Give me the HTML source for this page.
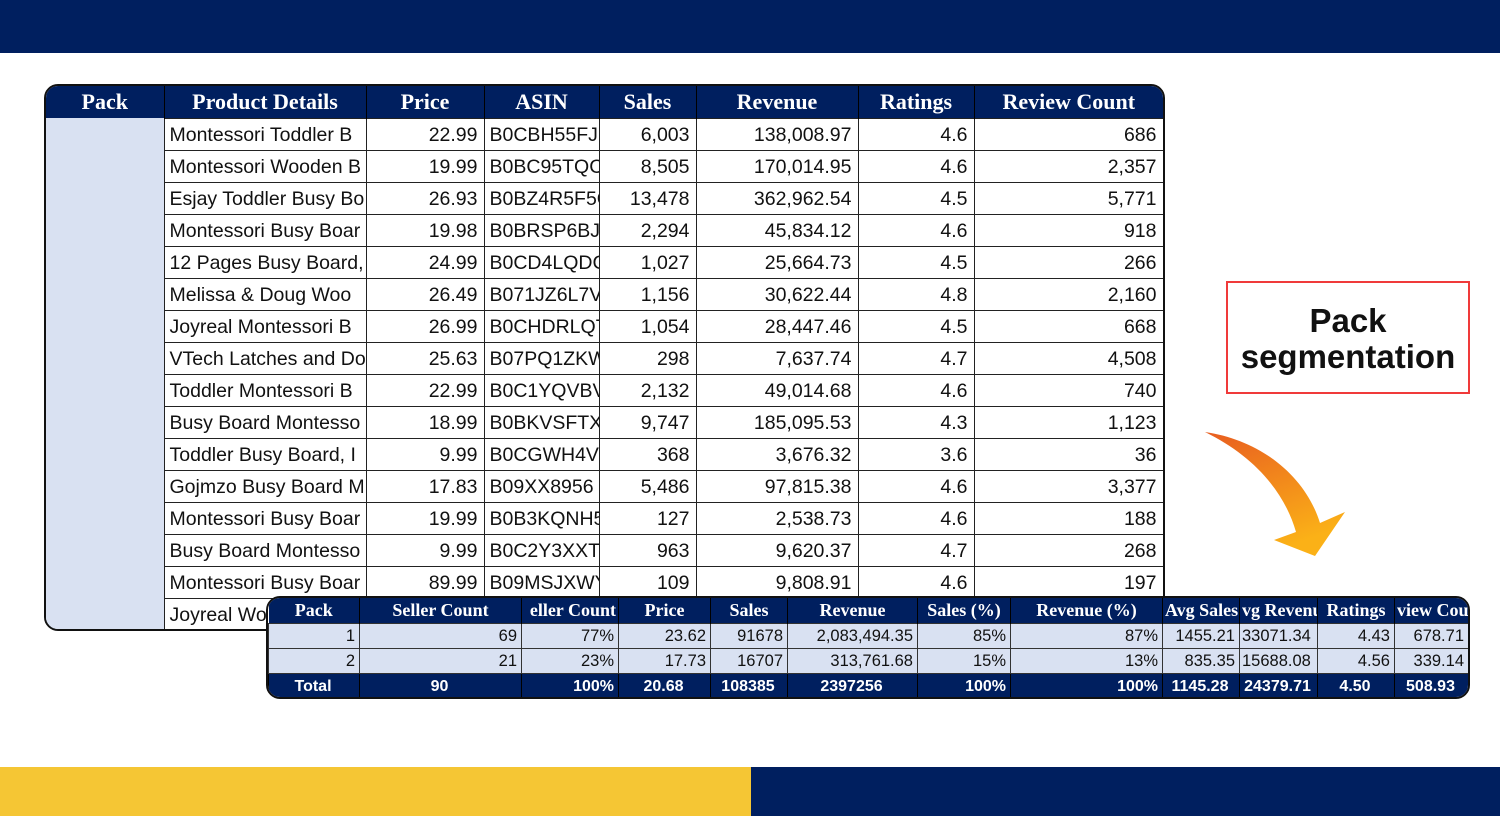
<!DOCTYPE html><html><head><meta charset="utf-8"><style>
body{margin:0;width:1500px;height:816px;position:relative;background:#fff;overflow:hidden;font-family:"Liberation Sans",sans-serif}
.bar{position:absolute}
table{border-collapse:collapse;table-layout:fixed;position:absolute}
td,th{overflow:hidden;white-space:nowrap;padding:0 5px;box-sizing:border-box}
#t1 th{background:#001f5f;color:#fff;font:bold 22px "Liberation Serif",serif;height:32px;text-align:center;border-left:1.5px solid #000}
#t1 td{height:32px;font-size:19.5px;color:#111;border:1.5px solid #222;text-align:right;padding:3px 6px 0 5px}
#t1 td.l{text-align:left}
#t1 td.p{background:#d9e1f2;border:none}
#w1{position:absolute;left:44px;top:84px;width:1117px;height:543px;border:2px solid #111;border-radius:14px;overflow:hidden;background:#fff}
#w2{position:absolute;left:266px;top:596px;width:1200px;height:99px;border:2px solid #111;border-radius:14px;overflow:hidden;background:#fff}
#t2 th{background:#001f5f;color:#fff;font:bold 18px "Liberation Serif",serif;height:25px;text-align:center;border-left:1.5px solid #000;padding:0 2px}
#t2 td{height:25px;font-size:16.5px;border:1.5px solid #333;background:#d9e1f2;text-align:right;padding:2px 4px 0 2px;color:#111}
#t2 tr.tot td{background:#001f5f;color:#fff;font-weight:bold;border-color:#000;text-align:center;font-size:16px}
</style></head><body>
<div class="bar" style="left:0;top:0;width:1500px;height:53px;background:#001f5f"></div>
<div class="bar" style="left:0;top:767px;width:751px;height:49px;background:#f5c634"></div>
<div class="bar" style="left:751px;top:767px;width:749px;height:49px;background:#001f5f"></div>

<div id="w1"><table id="t1" style="left:0;top:0;width:1117px">
<colgroup><col style="width:118px"><col style="width:202px"><col style="width:118px"><col style="width:115px"><col style="width:97px"><col style="width:162px"><col style="width:116px"><col style="width:189px"></colgroup>
<tr><th style="border-left:none">Pack</th><th>Product Details</th><th>Price</th><th>ASIN</th><th>Sales</th><th>Revenue</th><th>Ratings</th><th>Review Count</th></tr>
<tr><td class="p" rowspan="16"></td><td class="l">Montessori Toddler B</td><td>22.99</td><td class="l">B0CBH55FJK</td><td>6,003</td><td>138,008.97</td><td>4.6</td><td>686</td></tr>
<tr><td class="l">Montessori Wooden B</td><td>19.99</td><td class="l">B0BC95TQCX</td><td>8,505</td><td>170,014.95</td><td>4.6</td><td>2,357</td></tr>
<tr><td class="l">Esjay Toddler Busy Bo</td><td>26.93</td><td class="l">B0BZ4R5F5C</td><td>13,478</td><td>362,962.54</td><td>4.5</td><td>5,771</td></tr>
<tr><td class="l">Montessori Busy Boar</td><td>19.98</td><td class="l">B0BRSP6BJJ</td><td>2,294</td><td>45,834.12</td><td>4.6</td><td>918</td></tr>
<tr><td class="l">12 Pages Busy Board,</td><td>24.99</td><td class="l">B0CD4LQDC</td><td>1,027</td><td>25,664.73</td><td>4.5</td><td>266</td></tr>
<tr><td class="l">Melissa &amp; Doug Woo</td><td>26.49</td><td class="l">B071JZ6L7V</td><td>1,156</td><td>30,622.44</td><td>4.8</td><td>2,160</td></tr>
<tr><td class="l">Joyreal Montessori B</td><td>26.99</td><td class="l">B0CHDRLQT</td><td>1,054</td><td>28,447.46</td><td>4.5</td><td>668</td></tr>
<tr><td class="l">VTech Latches and Do</td><td>25.63</td><td class="l">B07PQ1ZKW</td><td>298</td><td>7,637.74</td><td>4.7</td><td>4,508</td></tr>
<tr><td class="l">Toddler Montessori B</td><td>22.99</td><td class="l">B0C1YQVBV</td><td>2,132</td><td>49,014.68</td><td>4.6</td><td>740</td></tr>
<tr><td class="l">Busy Board Montesso</td><td>18.99</td><td class="l">B0BKVSFTX</td><td>9,747</td><td>185,095.53</td><td>4.3</td><td>1,123</td></tr>
<tr><td class="l">Toddler Busy Board, I</td><td>9.99</td><td class="l">B0CGWH4V</td><td>368</td><td>3,676.32</td><td>3.6</td><td>36</td></tr>
<tr><td class="l">Gojmzo Busy Board M</td><td>17.83</td><td class="l">B09XX8956</td><td>5,486</td><td>97,815.38</td><td>4.6</td><td>3,377</td></tr>
<tr><td class="l">Montessori Busy Boar</td><td>19.99</td><td class="l">B0B3KQNH5</td><td>127</td><td>2,538.73</td><td>4.6</td><td>188</td></tr>
<tr><td class="l">Busy Board Montesso</td><td>9.99</td><td class="l">B0C2Y3XXT</td><td>963</td><td>9,620.37</td><td>4.7</td><td>268</td></tr>
<tr><td class="l">Montessori Busy Boar</td><td>89.99</td><td class="l">B09MSJXWY</td><td>109</td><td>9,808.91</td><td>4.6</td><td>197</td></tr>
<tr><td class="l">Joyreal Wooden</td><td></td><td></td><td></td><td></td><td></td><td></td></tr>
</table></div>

<div id="w2"><table id="t2" style="left:0;top:0;width:1200px">
<colgroup><col style="width:91px"><col style="width:162px"><col style="width:97px"><col style="width:92px"><col style="width:77px"><col style="width:130px"><col style="width:93px"><col style="width:152px"><col style="width:77px"><col style="width:78px"><col style="width:77px"><col style="width:74px"></colgroup>
<tr><th style="border-left:none">Pack</th><th>Seller Count</th><th style="text-align:right">eller Count</th><th>Price</th><th>Sales</th><th>Revenue</th><th>Sales (%)</th><th>Revenue (%)</th><th style="text-align:left">Avg Sales</th><th style="text-align:left">vg Revenu</th><th>Ratings</th><th style="text-align:left">view Cou</th></tr>
<tr><td>1</td><td>69</td><td>77%</td><td>23.62</td><td>91678</td><td>2,083,494.35</td><td>85%</td><td>87%</td><td>1455.21</td><td style="text-align:left">33071.34</td><td>4.43</td><td>678.71</td></tr>
<tr><td>2</td><td>21</td><td>23%</td><td>17.73</td><td>16707</td><td>313,761.68</td><td>15%</td><td>13%</td><td>835.35</td><td style="text-align:left">15688.08</td><td>4.56</td><td>339.14</td></tr>
<tr class="tot"><td>Total</td><td>90</td><td style="text-align:right">100%</td><td>20.68</td><td>108385</td><td>2397256</td><td style="text-align:right">100%</td><td style="text-align:right">100%</td><td>1145.28</td><td>24379.71</td><td>4.50</td><td>508.93</td></tr>
</table></div>

<div style="position:absolute;left:1226px;top:281px;width:244px;height:113px;border:2.5px solid #f03a3a;text-align:center;font:bold 33px/36px 'Liberation Sans',sans-serif;color:#111;box-sizing:border-box;padding-top:20px;letter-spacing:0px">Pack<br>segmentation</div>

<svg style="position:absolute;left:1190px;top:420px" width="170" height="150" viewBox="0 0 170 150">
<defs><linearGradient id="g" x1="0" y1="0" x2="0.4" y2="1"><stop offset="0" stop-color="#e85d20"/><stop offset="1" stop-color="#fbb117"/></linearGradient></defs>
<path d="M15 12 C70 20 115 55 130 103 L155 92 L125 136 L84 120 L106 112 C94 70 62 35 15 12 Z" fill="url(#g)"/>
</svg>
</body></html>
